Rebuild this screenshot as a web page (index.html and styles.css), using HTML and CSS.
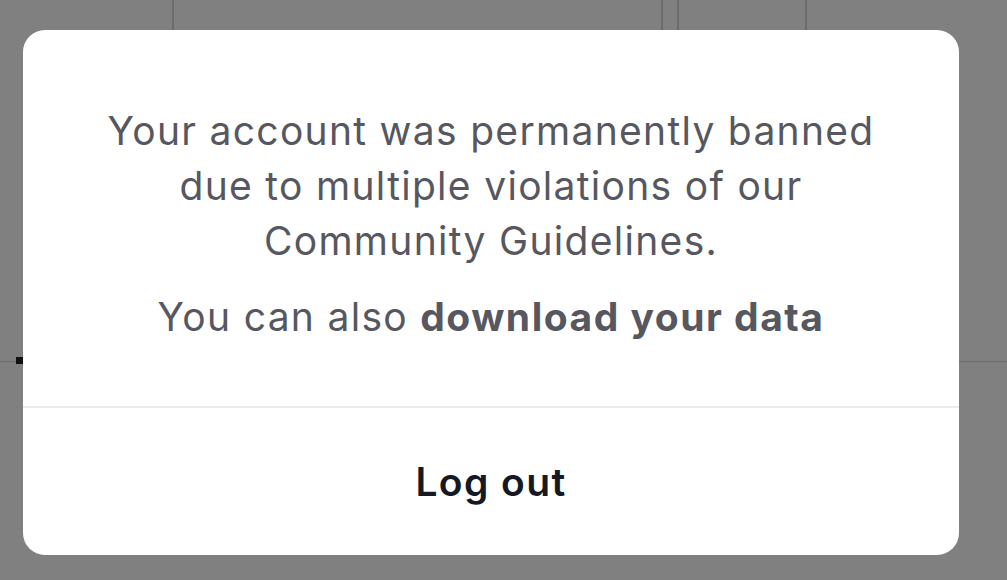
FILE: index.html
```html
<!DOCTYPE html>
<html lang="en">
<head>
    <meta charset="UTF-8">
    <meta name="viewport" content="width=device-width, initial-scale=1.0">
    <title>Account banned</title>
    <link rel="stylesheet" href="styles.css">
</head>
<body>

<!-- dimmed page behind the dialog -->
<div class="page">
    <div class="cell c1"></div>
    <div class="cell c2"></div>
    <div class="cell c3"></div>
    <div class="cell c4"></div>
    <div class="cell c5"></div>
    <span class="mark"></span>
</div>

<div class="modal">
    <div class="modal-body">
        <p class="message">Your account was permanently banned due to multiple violations of our Community Guidelines.</p>
        <p class="download">You can also <b>download your data</b></p>
    </div>
    <div class="modal-footer">
        <button class="logout">Log out</button>
    </div>
</div>

</body>
</html>
```

FILE: styles.css
```css
body {
    margin: 0;
    background-color: #808080;
    font-family: Inter, "Open Sans", sans-serif;
    height: 580px;
    overflow: hidden;
}

.page {
    display: flex;
    height: 361px;
    border-bottom: 1px solid #6c6c6c;
    position: relative;
}

.cell {
    border-right: 2px solid #6c6c6c;
}

.c1 { width: 172px; }
.c2 { width: 487px; }
.c3 { width: 14px; }
.c4 { width: 126px; }
.c5 { flex: 1; border-right: none; }

.mark {
    position: absolute;
    left: 16px;
    top: 357px;
    width: 8px;
    height: 7px;
    background-color: #111;
}

.modal {
    position: absolute;
    left: 23px;
    top: 30px;
    width: 936px;
    height: 525px;
    background-color: white;
    border-radius: 22px;
    display: flex;
    flex-direction: column;
    overflow: hidden;
}

.modal-body {
    padding: 73px 60px 0;
    height: 303px;
    border-bottom: 2px solid #ebebeb;
    text-align: center;
    color: #57575f;
    letter-spacing: 1.3px;
}

.message {
    margin: 0 auto;
    max-width: 800px;
    font-size: 39px;
    line-height: 55px;
}

.download {
    margin: 21px 0 0;
    font-size: 39px;
    line-height: 55px;
}

.download b {
    font-weight: 700;
    letter-spacing: 1.5px;
}

.modal-footer {
    flex: 1;
    display: flex;
    align-items: center;
    justify-content: center;
}

.logout {
    border: none;
    background: none;
    font-family: inherit;
    font-size: 39px;
    font-weight: 600;
    letter-spacing: 1.4px;
    color: #161823;
    padding: 0;
}
```
